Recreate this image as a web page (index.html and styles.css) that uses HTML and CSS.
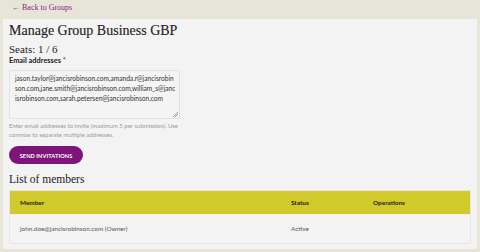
FILE: index.html
```html
<!DOCTYPE html>
<html>
<head>
<meta charset="utf-8">
<link rel="stylesheet" href="styles.css">
</head>
<body>
<div class="topbar"><a class="back" href="#">← Back to Groups</a></div>
<main class="panel">
  <h1 class="title">Manage Group Business GBP</h1>
  <h2 class="seats">Seats: 1 / 6</h2>
  <label class="label">Email addresses <span class="req">*</span></label>
  <div class="textarea">jason.taylor@jancisrobinson.com,amanda.r@jancisrobinson.com,jane.smith@jancisrobinson.com,william_s@jancisrobinson.com,sarah.petersen@jancisrobinson.com<span class="grip"></span></div>
  <p class="help">Enter email addresses to invite (maximum 5 per submission). Use commas to separate multiple addresses.</p>
  <button class="btn">SEND INVITATIONS</button>
  <h2 class="list-title">List of members</h2>
  <table class="members">
    <thead>
      <tr><th class="c-member">Member</th><th class="c-status">Status</th><th class="c-ops">Operations</th></tr>
    </thead>
    <tbody>
      <tr><td>john.doe@jancisrobinson.com (Owner)</td><td>Active</td><td></td></tr>
    </tbody>
  </table>
</main>
</body>
</html>
```
FILE: styles.css
```css
html, body { margin: 0; padding: 0; }
body {
  background: #e7e4d8;
  width: 480px;
  height: 252px;
  overflow: hidden;
  font-family: "Lato", "Open Sans", sans-serif;
}
.topbar {
  height: 19px;
  padding-left: 12px;
  box-sizing: border-box;
  font-size: 8px;
  line-height: 15px;
}
.back {
  font-family: "Liberation Serif", serif;
  font-size: 8px;
  color: #8c1d86;
  text-decoration: none;
}
.panel {
  margin: 0 3px;
  background: #f3f3f3;
  height: 230px;
  padding: 3px 6px 0 6px;
  box-sizing: border-box;
}
.title {
  margin: 0;
  font-family: "Liberation Serif", serif;
  font-weight: normal;
  font-size: 14px;
  line-height: 18px;
  color: #1f1f1f;
  -webkit-text-stroke: 0.15px #1f1f1f;
}
.seats {
  margin: 3px 0 0 0;
  font-family: "Liberation Serif", serif;
  font-weight: normal;
  font-size: 11px;
  line-height: 13px;
  color: #222;
}
.label {
  display: block;
  margin-top: 1px;
  font-size: 7.4px;
  font-weight: bold;
  color: #222;
  line-height: 8px;
}
.req { color: #b0205a; }
.textarea {
  position: relative;
  margin-top: 5px;
  width: 171px;
  height: 49px;
  box-sizing: border-box;
  border: 1px solid #e2e2e2;
  border-radius: 2px;
  background: #f4f4f4;
  padding: 2px 3px 2px 5px;
  font-size: 6.6px;
  line-height: 10px;
  color: #333;
  word-break: break-all;
}
.grip {
  position: absolute;
  right: 1px;
  bottom: 1px;
  width: 5px;
  height: 5px;
  background: linear-gradient(135deg, transparent 45%, #999 45%, #999 55%, transparent 55%, transparent 70%, #999 70%, #999 80%, transparent 80%);
}
.help {
  margin: 3px 0 0 0;
  width: 172px;
  font-size: 6px;
  line-height: 8.5px;
  color: #9a9a9a;
}
.btn {
  display: block;
  margin-top: 7px;
  width: 74px;
  height: 18px;
  border: none;
  border-radius: 9px;
  background: #7e1479;
  color: #fff;
  font-family: "Lato", sans-serif;
  font-weight: bold;
  font-size: 5.6px;
  letter-spacing: 0.1px;
  padding: 0;
}
.list-title {
  margin: 9px 0 0 0;
  font-family: "Liberation Serif", serif;
  font-weight: normal;
  font-size: 11.5px;
  line-height: 13px;
  color: #222;
}
.members {
  margin-top: 4px;
  width: 462px;
  border-collapse: collapse;
  border: 1px solid #e6e6e6;
  font-size: 6.4px;
}
.members thead tr {
  background: #d2ca2a;
  height: 23px;
}
.members th {
  text-align: left;
  font-weight: bold;
  color: #222;
  padding: 0 0 0 10px;
}
.members td {
  height: 29px;
  padding: 0 0 0 10px;
  color: #555;
}
.c-member { width: 261px; }
.c-status { width: 72px; }
```
